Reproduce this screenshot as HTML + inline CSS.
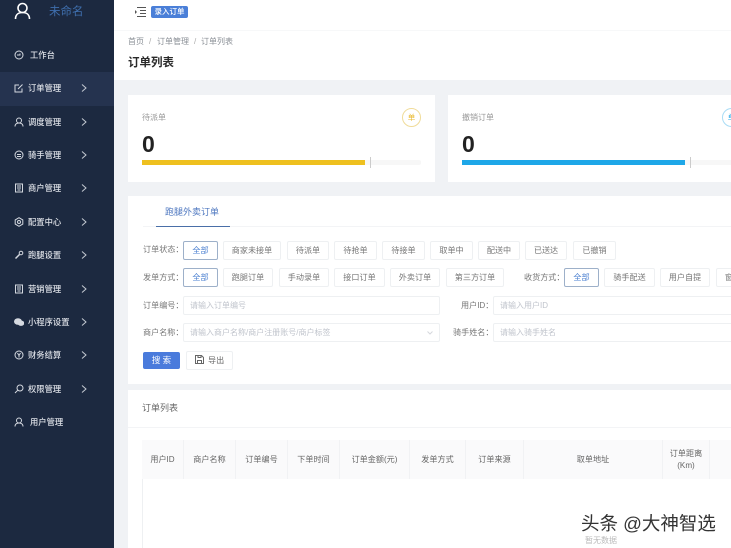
<!DOCTYPE html>
<html lang="zh"><head><meta charset="utf-8"><title>订单列表</title>
<style>
*{box-sizing:border-box}
html,body{margin:0;padding:0}
body{width:731px;height:548px;position:relative;overflow:hidden;background:#f0f2f5;font-family:"Liberation Sans","Noto Sans CJK SC",sans-serif;color:#606266}
#p{position:absolute;left:0;top:0;width:731px;height:548px;filter:blur(.35px);overflow:hidden}
.a{position:absolute;white-space:nowrap}
.side{left:0;top:0;width:114px;height:548px;background:#1c2940}
.act{left:0;top:72px;width:114px;height:34px;background:#25334f}
.mi{color:#dde0e6;font-size:8.3px;line-height:12px;font-weight:500}
.ic{position:absolute;width:10px;height:10px;fill:none;stroke:#d5d9e0;stroke-width:1}
.ch{position:absolute;width:6px;height:8px;fill:none;stroke:#c5cad3;stroke-width:1}
.w{background:#fff}
.btn{position:absolute;height:19px;border:1px solid #eef0f2;border-radius:2px;background:#fff;font-size:8.1px;line-height:17px;text-align:center;color:#777;white-space:nowrap}
.on{border-color:#9db0c9;color:#4a7fd0}
.lb{position:absolute;font-size:8.1px;line-height:12px;color:#777;white-space:nowrap}
.inp{position:absolute;height:19px;border:1px solid #eef0f2;border-radius:2px;background:#fff;font-size:8px;line-height:17px;color:#c0c4cc;padding-left:6px;white-space:nowrap;overflow:hidden}
.th{position:absolute;top:440px;height:39px;background:#fafafb;border-right:1px solid #f1f2f4;font-size:8.1px;color:#666;display:flex;align-items:center;justify-content:center;text-align:center;line-height:12px}
</style></head><body>
<div id="p">
<div class="a w" style="left:114px;top:0;width:617px;height:30px"></div>
<div class="a w" style="left:114px;top:31px;width:617px;height:49px"></div>
<div class="a" style="left:114px;top:30px;width:617px;height:1px;background:#f7f8f9"></div>
<div class="a side"></div><div class="a act"></div>
<svg class="a" style="left:14px;top:2px;width:18px;height:18px;fill:none;stroke:#fff;stroke-width:1.6"><circle cx="8.500" cy="6" r="4.500"/><path d="M1.500 17c0-4.500 3-6.500 7-6.500s7 2 7 6.500"/></svg>
<div class="a" style="left:49px;top:4px;font-size:11.500px;line-height:16px;color:#3f6fae">未命名</div>

<svg class="ic" style="left:14px;top:50px" viewBox="0 0 10 10"><circle cx="5" cy="5" r="4"/><path d="M3 5h3V3.500"/></svg><div class="a mi" style="left:30px;top:49px">工作台</div>
<svg class="ic" style="left:14px;top:83px" viewBox="0 0 10 10"><path d="M8 5.500V9H1V2h4M4 6l4.500-4.500"/></svg><div class="a mi" style="left:28px;top:82px">订单管理</div>
<svg class="ic" style="left:14px;top:117px" viewBox="0 0 10 10"><circle cx="5" cy="3.500" r="2.500"/><path d="M1 9.500c0-2.500 2-3.500 4-3.500s4 1 4 3.500"/></svg><div class="a mi" style="left:28px;top:116px">调度管理</div>
<svg class="ic" style="left:14px;top:150px" viewBox="0 0 10 10"><circle cx="5" cy="5" r="4"/><path d="M3 4.500h4M3 6.500h4"/></svg><div class="a mi" style="left:28px;top:149px">骑手管理</div>
<svg class="ic" style="left:14px;top:183px" viewBox="0 0 10 10"><path d="M1.500 1h7v8h-7zM3 3h4M3 5h4M3.500 7h3"/></svg><div class="a mi" style="left:28px;top:182px">商户管理</div>
<svg class="ic" style="left:14px;top:217px" viewBox="0 0 10 10"><path d="M5 .700 8.800 2.900V7.100L5 9.300 1.200 7.100V2.900z"/><circle cx="5" cy="5" r="1.500"/></svg><div class="a mi" style="left:28px;top:216px">配置中心</div>
<svg class="ic" style="left:14px;top:250px" viewBox="0 0 10 10"><circle cx="7" cy="3" r="1.800"/><path d="M5.500 4.500 1.500 8.500" stroke-width="1.500"/></svg><div class="a mi" style="left:28px;top:249px">跑腿设置</div>
<svg class="ic" style="left:14px;top:284px" viewBox="0 0 10 10"><path d="M1.500 1h7v8h-7zM3 3h4M3 5h4M3.500 7h3"/></svg><div class="a mi" style="left:28px;top:283px">营销管理</div>
<svg class="ic" style="left:14px;top:317px" viewBox="0 0 10 10"><ellipse cx="4" cy="4.500" rx="3.500" ry="2.800" fill="#d5d9e0"/><ellipse cx="7" cy="6.200" rx="2.800" ry="2.200" fill="#d5d9e0"/></svg><div class="a mi" style="left:28px;top:316px">小程序设置</div>
<svg class="ic" style="left:14px;top:350px" viewBox="0 0 10 10"><circle cx="5" cy="5" r="4"/><path d="M3.500 3 5 5.500 6.500 3M5 5.500V7.500"/></svg><div class="a mi" style="left:28px;top:349px">财务结算</div>
<svg class="ic" style="left:14px;top:384px" viewBox="0 0 10 10"><circle cx="6" cy="4" r="3"/><path d="M3.800 6.200 1 9"/></svg><div class="a mi" style="left:28px;top:383px">权限管理</div>
<svg class="ic" style="left:14px;top:417px" viewBox="0 0 10 10"><circle cx="5" cy="3.500" r="2.500"/><path d="M1 9.500c0-2.500 2-3.500 4-3.500s4 1 4 3.500"/></svg><div class="a mi" style="left:30px;top:416px">用户管理</div>

<svg class="ch" style="left:81px;top:84px" viewBox="0 0 6 8"><path d="M1 .500 5 4 1 7.500"/></svg>
<svg class="ch" style="left:81px;top:118px" viewBox="0 0 6 8"><path d="M1 .500 5 4 1 7.500"/></svg>
<svg class="ch" style="left:81px;top:151px" viewBox="0 0 6 8"><path d="M1 .500 5 4 1 7.500"/></svg>
<svg class="ch" style="left:81px;top:184px" viewBox="0 0 6 8"><path d="M1 .500 5 4 1 7.500"/></svg>
<svg class="ch" style="left:81px;top:218px" viewBox="0 0 6 8"><path d="M1 .500 5 4 1 7.500"/></svg>
<svg class="ch" style="left:81px;top:251px" viewBox="0 0 6 8"><path d="M1 .500 5 4 1 7.500"/></svg>
<svg class="ch" style="left:81px;top:285px" viewBox="0 0 6 8"><path d="M1 .500 5 4 1 7.500"/></svg>
<svg class="ch" style="left:81px;top:318px" viewBox="0 0 6 8"><path d="M1 .500 5 4 1 7.500"/></svg>
<svg class="ch" style="left:81px;top:351px" viewBox="0 0 6 8"><path d="M1 .500 5 4 1 7.500"/></svg>
<svg class="ch" style="left:81px;top:385px" viewBox="0 0 6 8"><path d="M1 .500 5 4 1 7.500"/></svg>

<svg class="a" style="left:134px;top:6px;width:12px;height:11px;fill:none;stroke:#555;stroke-width:1"><path d="M3 1.500h9M6 4.500h6M6 7.500h6M3 10.500h9"/><path d="M1 4l2 2-2 2z" fill="#555" stroke="none"/></svg>
<div class="a" style="left:151px;top:6px;width:37px;height:12px;background:#4a7fd8;border-radius:2px;color:#fff;font-size:7.500px;line-height:12px;text-align:center;font-weight:500">录入订单</div>
<div class="a" style="left:128px;top:36px;font-size:8px;line-height:12px;color:#8a8f96">首页</div>
<div class="a" style="left:149px;top:36px;font-size:8px;line-height:12px;color:#aaa">/</div>
<div class="a" style="left:157px;top:36px;font-size:8px;line-height:12px;color:#8a8f96">订单管理</div>
<div class="a" style="left:194px;top:36px;font-size:8px;line-height:12px;color:#aaa">/</div>
<div class="a" style="left:201px;top:36px;font-size:8px;line-height:12px;color:#8a8f96">订单列表</div>
<div class="a" style="left:128px;top:55px;font-size:11.500px;line-height:16px;color:#2a2a2a;font-weight:700">订单列表</div>

<div class="a w" style="left:128px;top:95px;width:307px;height:87px"></div>
<div class="a w" style="left:448px;top:95px;width:283px;height:87px"></div>
<div class="a" style="left:142px;top:112px;font-size:8px;line-height:12px;color:#999">待派单</div>
<div class="a" style="left:462px;top:112px;font-size:8px;line-height:12px;color:#999">撤销订单</div>
<div class="a" style="left:142px;top:131px;font-size:23px;line-height:26px;font-weight:700;color:#222">0</div>
<div class="a" style="left:462px;top:131px;font-size:23px;line-height:26px;font-weight:700;color:#222">0</div>
<div class="a" style="left:402px;top:108px;width:19px;height:19px;border:1px solid #f0dc9a;border-radius:50%;font-size:7.500px;line-height:17px;text-align:center;color:#e9b92c">单</div>
<div class="a" style="left:722px;top:108px;width:19px;height:19px;border:1px solid #a9dcf5;border-radius:50%;font-size:7.500px;line-height:17px;text-align:center;color:#1ea7e8">单</div>
<div class="a" style="left:142px;top:160px;width:279px;height:5px;background:#f7f7f7;border-radius:2px"></div>
<div class="a" style="left:142px;top:160px;width:223px;height:5px;background:#eec01f"></div>
<div class="a" style="left:370px;top:157px;width:1px;height:11px;background:#ccc"></div>
<div class="a" style="left:462px;top:160px;width:269px;height:5px;background:#f7f7f7"></div>
<div class="a" style="left:462px;top:160px;width:223px;height:5px;background:#1ea7e8"></div>
<div class="a" style="left:690px;top:157px;width:1px;height:11px;background:#ccc"></div>

<div class="a w" style="left:128px;top:196px;width:603px;height:188px"></div>
<div class="a" style="left:165px;top:206px;font-size:9px;line-height:13px;color:#4f78c0">跑腿外卖订单</div>
<div class="a" style="left:143px;top:226px;width:588px;height:1px;background:#f3f4f6"></div>
<div class="a" style="left:156px;top:226px;width:74px;height:1px;background:#4a6fa8"></div>

<div class="lb" style="left:143px;top:244px">订单状态：</div>
<div class="btn on" style="left:183px;top:241px;width:35px">全部</div>
<div class="btn" style="left:223px;top:241px;width:58px">商家未接单</div>
<div class="btn" style="left:287px;top:241px;width:42px">待派单</div>
<div class="btn" style="left:334px;top:241px;width:43px">待抢单</div>
<div class="btn" style="left:382px;top:241px;width:43px">待接单</div>
<div class="btn" style="left:430px;top:241px;width:43px">取单中</div>
<div class="btn" style="left:478px;top:241px;width:42px">配送中</div>
<div class="btn" style="left:525px;top:241px;width:42px">已送达</div>
<div class="btn" style="left:573px;top:241px;width:43px">已撤销</div>

<div class="lb" style="left:143px;top:272px">发单方式：</div>
<div class="btn on" style="left:183px;top:268px;width:35px">全部</div>
<div class="btn" style="left:223px;top:268px;width:50px">跑腿订单</div>
<div class="btn" style="left:279px;top:268px;width:50px">手动录单</div>
<div class="btn" style="left:334px;top:268px;width:51px">接口订单</div>
<div class="btn" style="left:390px;top:268px;width:50px">外卖订单</div>
<div class="btn" style="left:446px;top:268px;width:58px">第三方订单</div>
<div class="lb" style="left:524px;top:272px">收货方式：</div>
<div class="btn on" style="left:564px;top:268px;width:35px">全部</div>
<div class="btn" style="left:604px;top:268px;width:51px">骑手配送</div>
<div class="btn" style="left:660px;top:268px;width:50px">用户自提</div>
<div class="btn" style="left:716px;top:268px;width:50px;text-align:left;padding-left:8px">窗口</div>

<div class="lb" style="left:143px;top:300px">订单编号：</div>
<div class="inp" style="left:183px;top:296px;width:257px">请输入订单编号</div>
<div class="lb" style="left:461px;top:300px">用户ID：</div>
<div class="inp" style="left:493px;top:296px;width:260px">请输入用户ID</div>
<div class="lb" style="left:143px;top:327px">商户名称：</div>
<div class="inp" style="left:183px;top:323px;width:257px">请输入商户名称/商户注册账号/商户标签</div>
<svg class="a" style="left:427px;top:331px;width:6px;height:4px;fill:none;stroke:#d5d8dd"><path d="M.5.500 3 3 5.500.500"/></svg>
<div class="lb" style="left:453px;top:327px">骑手姓名：</div>
<div class="inp" style="left:493px;top:323px;width:260px">请输入骑手姓名</div>

<div class="a" style="left:143px;top:352px;width:37px;height:17px;background:#4a7bdc;border-radius:2px;color:#fff;font-size:8.500px;line-height:17px;text-align:center">搜 索</div>
<div class="a" style="left:186px;top:351px;width:47px;height:19px;border:1px solid #eef0f2;border-radius:2px;background:#fff;font-size:8.100px;line-height:17px;color:#666;padding-left:21px">导出</div>
<svg class="a" style="left:195px;top:355px;width:9px;height:9px;fill:none;stroke:#666"><path d="M.5.500h6l2 2v6h-8zM3 .500v2h3v-2M2.500 8.500v-3h4v3"/></svg>

<div class="a w" style="left:128px;top:390px;width:603px;height:158px"></div>
<div class="a" style="left:142px;top:402px;font-size:9px;line-height:13px;color:#666">订单列表</div>
<div class="a" style="left:128px;top:427px;width:603px;height:1px;background:#f3f4f6"></div>
<div class="a" style="left:142px;top:440px;width:1px;height:108px;background:#eef0f2"></div>
<div class="th" style="left:142px;width:42px">用户ID</div>
<div class="th" style="left:184px;width:52px">商户名称</div>
<div class="th" style="left:236px;width:52px">订单编号</div>
<div class="th" style="left:288px;width:52px">下单时间</div>
<div class="th" style="left:340px;width:70px">订单金额(元)</div>
<div class="th" style="left:410px;width:56px">发单方式</div>
<div class="th" style="left:466px;width:58px">订单来源</div>
<div class="th" style="left:524px;width:139px">取单地址</div>
<div class="th" style="left:663px;width:47px">订单距离<br>(Km)</div>
<div class="th" style="left:710px;width:21px;border-right:0"></div>
<div class="a" style="left:585px;top:535px;font-size:8px;line-height:11px;color:#bbb">暂无数据</div>
</div>
<div class="a" style="left:581px;top:513px;font-size:18.500px;line-height:22px;color:#333;text-shadow:1px 1px 0 #fff,-1px 0 0 #fff">头条 @大神智选</div>
</body></html>
